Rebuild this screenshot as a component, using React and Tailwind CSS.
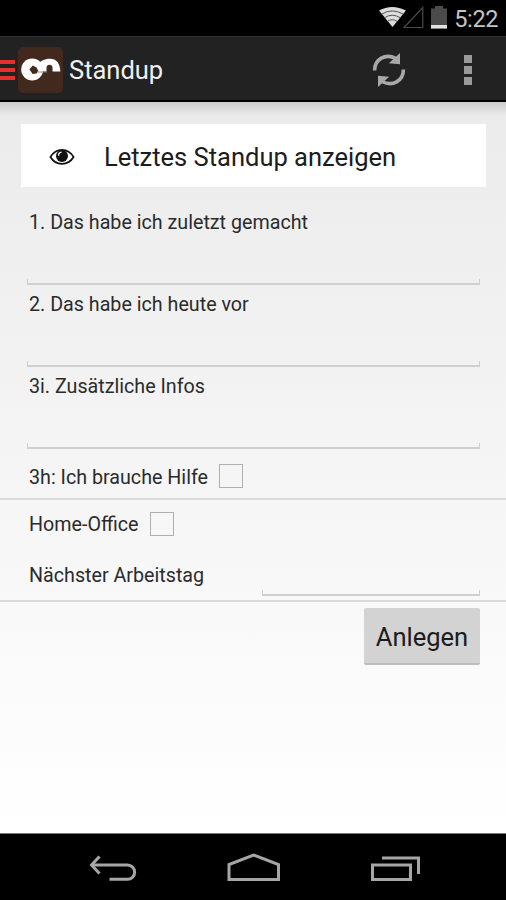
import React, { useState } from "react";

const FIELDS = [
  { id: "last", label: "1. Das habe ich zuletzt gemacht" },
  { id: "today", label: "2. Das habe ich heute vor" },
  { id: "infos", label: "3i. Zusätzliche Infos" },
];

const StatusBar = () => (
  <div className="flex h-9 items-center justify-end bg-black pr-[8px]">
    <svg width="72" height="24" viewBox="0 0 72 24" className="mr-[4px]">
      {/* wifi */}
      <path d="M1 4.6 Q14 -2.8 28 4.6 L14.5 21 Z" fill="#dcdcdc" />
      <path
        d="M3.6 8.2 Q14 1.6 25.4 8.2 M6.4 11.8 Q14 6.6 22.4 11.8 M9.4 15.4 Q14.2 12 19.2 15.4"
        fill="none"
        stroke="#555"
        strokeWidth="1"
      />
      {/* signal */}
      <path d="M26 21.5 H44.8 V1.5 Z" fill="none" stroke="#4a4a4a" strokeWidth="1.2" />
      {/* battery */}
      <path d="M53 2.4 h4 v-2.4 h8 v2.4 h4 v20 h-16 Z" fill="#4b4b4b" />
      <path d="M53 19 h16 v3.5 h-16 Z" fill="#e2e2e2" />
    </svg>
    <span className="pt-[3px] text-[23.5px] leading-none tracking-[-0.4px] text-[#c4c4c4]">5:22</span>
  </div>
);

const ActionBar = () => (
  <header className="flex h-[66px] items-center border-b-2 border-t border-b-black border-t-[#333] bg-[#222] pt-[2px]">
    <div className="flex w-[15px] flex-col gap-[4px]">
      <div className="h-[4px] bg-[#e2312f]" />
      <div className="h-[4px] bg-[#e2312f]" />
      <div className="h-[4px] bg-[#e2312f]" />
    </div>
    <svg width="45" height="46" viewBox="0 0 45 46" className="ml-[3px]">
      <rect width="45" height="46" rx="5" fill="#41291d" />
      <circle cx="14.2" cy="22.5" r="11" fill="#fff" />
      <path
        d="M20 16.5 C23 14.5 26 11.8 32 11.8 C38.5 11.8 42.3 16.5 42.3 24.6 H34.5 V20.5 Q34.2 17.8 31.5 17.8 Q28.8 17.8 28.5 20.5 V24.6 H18 Z"
        fill="#fff"
      />
      <path d="M11.4 22.2 L14.8 18.4 L18.6 20.4 L20.2 23.8 L18.6 26.4 L14.6 27 Z" fill="#41291d" />
      <path d="M19.5 25 H29" stroke="#8a7c75" strokeWidth="0.9" />
    </svg>
    <h1 className="ml-[6px] pt-[2px] text-[25.5px] leading-none text-[#f0f0f0]">Standup</h1>
    <svg width="34" height="36" viewBox="0 0 34 36" className="ml-auto mr-[58px]">
      <g fill="none" stroke="#a8a8a8" strokeWidth="3.6">
        <path d="M2.6 18.5 C2.6 7 13.5 1 24 6.5" />
        <path d="M31.4 17.5 C31.4 29 20.5 35 10 29.5" />
      </g>
      <path d="M28 0.9 V12.2 L16.8 11.2 Z" fill="#a8a8a8" />
      <path d="M6 35.1 V23.8 L17.2 24.8 Z" fill="#a8a8a8" />
    </svg>
    <div className="mr-[34px] flex flex-col gap-[3px]">
      <div className="size-[8px] bg-[#9a9a9a]" />
      <div className="size-[8px] bg-[#9a9a9a]" />
      <div className="size-[8px] bg-[#9a9a9a]" />
    </div>
  </header>
);

const Underline = ({ value, onChange, label, className }) => (
  <input
    aria-label={label}
    value={value}
    onChange={onChange}
    className={`block h-[6px] border-x border-b-2 border-[#cfcfcf] bg-transparent text-xs outline-none ${className}`}
  />
);

const CheckRow = ({ label, checked, onChange }) => (
  <label className="flex items-center gap-[11px]">
    <span className="pt-[3px]">{label}</span>
    <input
      type="checkbox"
      checked={checked}
      onChange={onChange}
      className="size-[24px] appearance-none border-[1.5px] border-[#b0b0b0] checked:bg-[#b0b0b0]"
    />
  </label>
);

const NavBar = () => (
  <nav className="flex h-[67px] items-center justify-center border-t border-[#777] bg-black pl-[6px] pt-[4px]">
    <svg width="336" height="34" viewBox="0 0 336 34" fill="none" stroke="#a6a6a6" strokeWidth="3">
      {/* back */}
      <path d="M11.5 4.5 L3.5 13 L11.5 21.5" />
      <path d="M4 13 H39.5 A7 7 0 0 1 39.5 27.3 H21.5" />
      {/* home */}
      <path d="M141 27.5 V12.5 L165.5 3 L190.5 12.5 V27.5 Z" />
      {/* recent apps */}
      <path d="M284.5 13 H322.5 V27.5 H284.5 Z" />
      <path d="M294 6 H330.5 V22" />
    </svg>
  </nav>
);

const App = () => {
  const [values, setValues] = useState({ last: "", today: "", infos: "", nextDay: "" });
  const [needsHelp, setNeedsHelp] = useState(false);
  const [homeOffice, setHomeOffice] = useState(false);

  const handleChange = (id) => (e) => setValues({ ...values, [id]: e.target.value });

  return (
    <div className="flex h-[900px] w-[506px] flex-col overflow-hidden font-['Roboto',sans-serif] text-[19.7px] leading-[24px] text-[#2b2b2b]">
      <StatusBar />
      <ActionBar />
      <main className="flex-1 bg-linear-to-b from-[#ebebeb] to-white">
        <div className="h-[14px] bg-linear-to-b from-[#cdcdcd] to-transparent" />
        <button className="ml-[21px] mt-[8px] flex h-[63px] w-[465px] items-center bg-white pl-[28px] pt-[2px] text-[25.5px] text-[#1c1c1c]">
          <svg width="26" height="18" viewBox="0 0 26 18" className="mr-[29px]">
            <path
              d="M1.4 9 C7 -0.6 19 -0.6 24.6 9 C19 18.2 7 18.2 1.4 9 Z"
              fill="none"
              stroke="#111"
              strokeWidth="1.7"
            />
            <circle cx="13" cy="8" r="6" fill="#111" />
            <path d="M9.6 7.8 A3.4 3.4 0 0 1 12.6 4.2" fill="none" stroke="#fff" strokeWidth="1.3" />
          </svg>
          Letztes Standup anzeigen
        </button>

        <div className="mt-[16px]">
          {FIELDS.map((field) => (
            <div key={field.id} className="mx-[27px] flex h-[82px] w-[453px] flex-col justify-between pt-[8px]">
              <span className="pl-[2px]">{field.label}</span>
              <Underline
                label={field.label}
                value={values[field.id]}
                onChange={handleChange(field.id)}
                className="w-full"
              />
            </div>
          ))}
        </div>

        <div className="flex h-[51px] items-center border-b-2 border-[#dadada] pl-[29px] pt-[5px]">
          <CheckRow
            label="3h: Ich brauche Hilfe"
            checked={needsHelp}
            onChange={() => setNeedsHelp(!needsHelp)}
          />
        </div>

        <div className="h-[102px] border-b-2 border-[#dadada] pl-[29px] pt-[10px]">
          <CheckRow
            label="Home-Office"
            checked={homeOffice}
            onChange={() => setHomeOffice(!homeOffice)}
          />
          <div className="mr-[26px] mt-[27px] flex h-[32px] items-end justify-between">
            <span className="self-start">Nächster Arbeitstag</span>
            <Underline
              label="Nächster Arbeitstag"
              value={values.nextDay}
              onChange={handleChange("nextDay")}
              className="w-[218px]"
            />
          </div>
        </div>

        <div className="flex justify-end pr-[26px] pt-[6px]">
          <button className="h-[57px] w-[116px] rounded-[2px] border-b-2 border-[#bdbdbd] bg-[#d3d3d3] pt-[2px] text-[25.5px] text-[#1c1c1c]">
            Anlegen
          </button>
        </div>
      </main>
      <NavBar />
    </div>
  );
};

export default App;
